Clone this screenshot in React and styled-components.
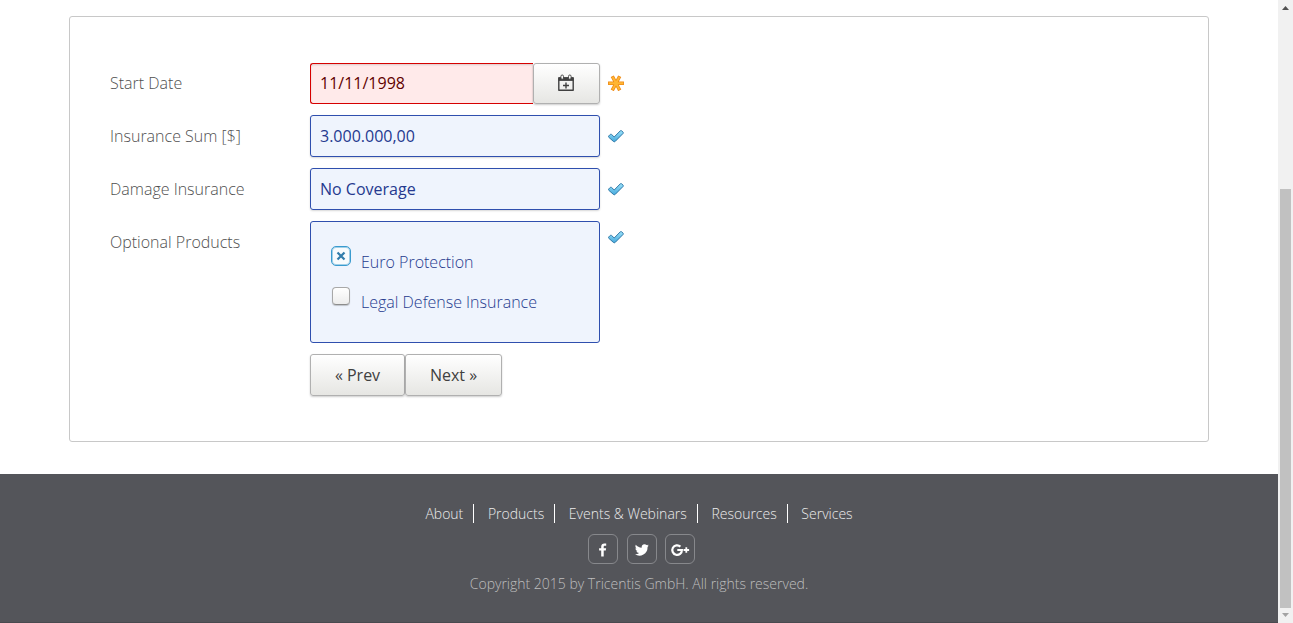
import React from "react";
import styled, { createGlobalStyle } from "styled-components";

const GlobalStyle = createGlobalStyle`
  *, *::before, *::after { box-sizing: border-box; }
  html, body { margin: 0; padding: 0; height: 623px; overflow: hidden; background: #fff; }
  body { font-family: "Open Sans", "Noto Sans", sans-serif; font-size: 16px; color: #606060; }
`;

const Window = styled.div`
  display: flex;
  width: 1293px;
  height: 623px;
`;

const Page = styled.div`
  display: flex;
  flex-direction: column;
  width: 1278px;
  background: #fff;
`;

const Panel = styled.form`
  width: 1140px;
  height: 426px;
  margin: 16px 0 32px 69px;
  padding: 45px 40px 0;
  border: 1px solid #c8c8c8;
  border-radius: 3px;
  display: flex;
  flex-direction: column;
  gap: 11px;
`;

const Row = styled.div`
  display: flex;
  height: ${(p) => p.$height || 42}px;
`;

const Label = styled.label`
  width: 200px;
  line-height: 42px;
  font-weight: 300;
  color: #505050;
`;

const tones = {
  error: { border: "#d60000", fill: "#ffeaea", text: "#5f0000" },
  valid: { border: "#2f4fae", fill: "#eff4fd", text: "#25398f" },
};

const Field = styled.div`
  flex: none;
  width: ${(p) => p.$width || 290}px;
  height: ${(p) => p.$height || 42}px;
  padding: 0 9px;
  line-height: ${(p) => (p.$height || 42) - 2}px;
  border: 1px solid ${(p) => tones[p.$tone].border};
  border-radius: 3px;
  background: ${(p) => tones[p.$tone].fill};
  color: ${(p) => tones[p.$tone].text};
  box-shadow: ${(p) => (p.$inset ? "inset 0 1px 2px rgba(0,0,0,0.14)" : "0 1px 2px rgba(0,0,0,0.16)")};
`;

const DateGroup = styled.div`
  display: flex;
  width: 290px;
  height: 41px;
  margin-top: 1px;
  ${Field} { border-right: 0; border-radius: 3px 0 0 3px; }
`;

const Button = styled.button`
  flex: none;
  display: flex;
  align-items: center;
  justify-content: center;
  width: ${(p) => p.$width}px;
  height: ${(p) => p.$height || 42}px;
  padding: ${(p) => (p.$icon ? "0 1px 1px 0" : "0")};
  border: 1px solid #b0b0b0;
  border-radius: 3px;
  background: linear-gradient(#ffffff, #e6e6e3);
  box-shadow: 0 1px 2px rgba(0, 0, 0, 0.2);
  font: 400 16px "Open Sans", sans-serif;
  color: #404040;
`;

const Marker = styled.span`
  display: block;
  height: 16px;
  margin: ${(p) => p.$top || 13}px 0 0 8px;
  svg { display: block; }
`;

const Options = styled.div`
  display: flex;
  flex-direction: column;
  width: 290px;
  height: 122px;
  padding: 20px 20px 0;
  border: 1px solid #2f4fae;
  border-radius: 3px;
  background: #eff4fd;
`;

const Option = styled.div`
  display: flex;
  height: 40px;
  font-weight: 300;
  line-height: 40px;
  color: #253a8e;
`;

const Box = styled.span`
  display: flex;
  align-items: center;
  justify-content: center;
  width: ${(p) => (p.$checked ? 20 : 18)}px;
  height: ${(p) => (p.$checked ? 20 : 18)}px;
  margin: ${(p) => (p.$checked ? "4px 10px 0 0" : "5px 11px 0 1px")};
  border: 1px solid ${(p) => (p.$checked ? "#3a9bcf" : "#a8a8a8")};
  border-bottom-color: ${(p) => (p.$checked ? "#3a9bcf" : "#8c8c8c")};
  border-radius: ${(p) => (p.$checked ? 5 : 4)}px;
  background: ${(p) => (p.$checked ? "#f8fbfd" : "linear-gradient(#fff, #ededed)")};
  box-shadow: ${(p) => (p.$checked ? "inset 0 0 0 1px rgba(58,155,207,0.45)" : "0 1px 1px rgba(0,0,0,0.2)")};
`;

const Actions = styled.div`
  display: flex;
  padding-left: 200px;
`;

const Footer = styled.footer`
  display: flex;
  flex-direction: column;
  align-items: center;
  height: 149px;
  padding-top: 30px;
  background: #54555a;
  border-bottom: 1px solid #494a4f;
  font-size: 14px;
  font-weight: 300;
`;

const Links = styled.nav`
  display: flex;
  height: 19px;
  line-height: 19px;
`;

const Link = styled.a`
  padding: 0 10px 0 0;
  margin-right: 13.64px;
  border-right: 1px solid #fff;
  color: #ececec;
  white-space: nowrap;
  &:last-child { border: 0; padding: 0; margin: 0; }
`;

const Social = styled.div`
  display: flex;
  gap: 9px;
  margin: 11px 0 10px 5px;
`;

const SocialButton = styled.a`
  display: flex;
  align-items: center;
  justify-content: center;
  width: 30px;
  height: 30px;
  padding-top: 2px;
  border: 1px solid #87888c;
  border-radius: 6px;
  &:last-child { margin-left: -1px; }
`;

const Copyright = styled.p`
  margin: 0;
  line-height: 19px;
  color: #bebebe;
`;

const Scrollbar = styled.div`
  display: flex;
  flex-direction: column;
  align-items: center;
  width: 15px;
  background: #f1f1f1;
`;

const Track = styled.div`
  display: flex;
  align-items: flex-end;
  flex: 1;
`;

const Thumb = styled.div`
  width: 11px;
  height: 419px;
  background: #c1c1c1;
`;

const Arrow = styled.span`
  display: flex;
  height: 15px;
  svg { display: block; }
`;

const CalendarIcon = () => (
  <svg width="16" height="18" viewBox="0 0 16 18" fill="none">
    <path d="M0.8 4h14.4v12.2H0.8z" stroke="#404040" strokeWidth="1.4" strokeLinejoin="round" />
    <path d="M0.5 3.3h15v3.6h-15z" fill="#404040" />
    <rect x="2.9" y="1" width="2.6" height="4.3" rx="1.3" fill="#f8f8f7" stroke="#404040" strokeWidth="0.9" />
    <rect x="10.5" y="1" width="2.6" height="4.3" rx="1.3" fill="#f8f8f7" stroke="#404040" strokeWidth="0.9" />
    <path d="M8 8.5v6M5 11.5h6" stroke="#404040" strokeWidth="1.4" />
  </svg>
);

const CheckIcon = () => (
  <svg width="16" height="16" viewBox="0 0 16 16">
    <defs>
      <linearGradient id="tick" x1="0" y1="0" x2="0" y2="1">
        <stop offset="0" stopColor="#9be2fa" />
        <stop offset="1" stopColor="#46a9dc" />
      </linearGradient>
    </defs>
    <path d="M0.7 8 2.3 6.4q.6-.5 1.2 0L6.2 9 12.3 2.8q.7-.6 1.3 0l1.5 1.4q.5.6 0 1.2L7.2 13.4q-.9.8-1.8 0L.7 9.200q-.5-.6 0-1.2z" fill="url(#tick)" stroke="#3179a7" strokeWidth="1" />
  </svg>
);

const RequiredIcon = () => (
  <svg width="16" height="16" viewBox="0 0 16 16" strokeLinecap="square">
    <path d="M1.800 8.300h12.400M5.100 2.800l5.800 11M10.900 2.800l-5.800 11" stroke="#ef8a14" strokeWidth="3.500" />
    <path d="M1.800 8.300h12.400M5.100 2.800l5.800 11M10.900 2.800l-5.800 11" stroke="#ffb634" strokeWidth="1.900" />
  </svg>
);

const FacebookIcon = () => (
  <svg width="10" height="14" viewBox="0 0 10 14">
    <path d="M8.200 0.500v2.200H6.900c-1 0-1.200.5-1.200 1.200v1.300h2.400l-.3 2.300H5.700v6H3.200v-6H1.100V5.200h2.100V3.500C3.200 1.400 4.500.4 6.300.4c.9 0 1.600.1 1.900.1z" fill="#fff" />
  </svg>
);

const TwitterIcon = () => (
  <svg width="14" height="12" viewBox="0 0 24 20">
    <path d="M23.600 2.300c-.9.4-1.800.6-2.800.8 1-.6 1.800-1.600 2.100-2.700-.9.6-2 .9-3.100 1.200A4.900 4.900 0 0 0 11.500 6C7.400 5.800 3.800 3.900 1.400.9c-1.300 2.200-.7 5.100 1.500 6.600-.8 0-1.600-.2-2.200-.6 0 2.300 1.600 4.400 3.900 4.900-.7.2-1.500.2-2.200.1.6 2 2.400 3.400 4.600 3.400A9.900 9.900 0 0 1 0 17.300 14 14 0 0 0 21.500 5c.8-.7 1.500-1.600 2.100-2.700z" fill="#fff" />
  </svg>
);

const GooglePlusIcon = () => (
  <svg width="20" height="14" viewBox="0 0 20 14">
    <path d="M10.400 3.600A4.800 4.800 0 1 0 11.900 7H7.300" fill="none" stroke="#fff" strokeWidth="2.200" />
    <path d="M13.500 7h5.600M16.300 4.200v5.600" stroke="#fff" strokeWidth="1.800" />
  </svg>
);

const CrossIcon = () => (
  <svg width="10" height="10" viewBox="0 0 10 10">
    <path d="M1.500 1.500l7 7M8.500 1.500l-7 7" stroke="#327dab" strokeWidth="2.200" />
  </svg>
);

const links = ["About", "Products", "Events & Webinars", "Resources", "Services"];

export default function App() {
  return (
    <Window>
      <GlobalStyle />
      <Page>
        <Panel>
          <Row>
            <Label>Start Date</Label>
            <DateGroup>
              <Field $tone="error" $width={223} $height={41} $inset>11/11/1998</Field>
              <Button type="button" $icon $width={67} $height={41} aria-label="Open calendar"><CalendarIcon /></Button>
            </DateGroup>
            <Marker><RequiredIcon /></Marker>
          </Row>
          <Row>
            <Label>Insurance Sum [$]</Label>
            <Field $tone="valid">3.000.000,00</Field>
            <Marker><CheckIcon /></Marker>
          </Row>
          <Row>
            <Label>Damage Insurance</Label>
            <Field $tone="valid">No Coverage</Field>
            <Marker><CheckIcon /></Marker>
          </Row>
          <Row $height={122}>
            <Label>Optional Products</Label>
            <Options>
              <Option><Box $checked><CrossIcon /></Box>Euro Protection</Option>
              <Option><Box />Legal Defense Insurance</Option>
            </Options>
            <Marker $top={8}><CheckIcon /></Marker>
          </Row>
          <Actions>
            <Button type="button" $width={95}>« Prev</Button>
            <Button type="button" $width={97}>Next »</Button>
          </Actions>
        </Panel>
        <Footer>
          <Links>{links.map((text) => <Link key={text}>{text}</Link>)}</Links>
          <Social>
            <SocialButton><FacebookIcon /></SocialButton>
            <SocialButton><TwitterIcon /></SocialButton>
            <SocialButton><GooglePlusIcon /></SocialButton>
          </Social>
          <Copyright>Copyright 2015 by Tricentis GmbH. All rights reserved.</Copyright>
        </Footer>
      </Page>
      <Scrollbar>
        <Arrow><svg width="15" height="15"><path d="M4 10h7L7.500 6z" fill="#505050" /></svg></Arrow>
        <Track><Thumb /></Track>
        <Arrow><svg width="15" height="15"><path d="M4 5h7L7.500 9z" fill="#a3a3a3" /></svg></Arrow>
      </Scrollbar>
    </Window>
  );
}
